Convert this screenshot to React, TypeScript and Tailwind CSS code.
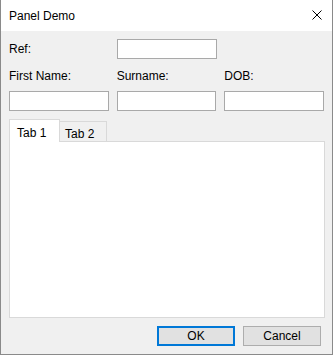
// Win32 스타일 "Panel Demo" 대화상자.

const FONT = "font-['Segoe_UI','Liberation_Sans',Arial,sans-serif]";

function TextBox() {
  return <div className="h-[20px] w-[100px] border border-[#a9a9a9] bg-white" />;
}

export default function App() {
  return (
    <div
      className={`${FONT} flex h-[355px] w-[333px] flex-col border-x border-b border-[#8a8a8a] text-[12px] text-black`}
    >
      {/* 제목 표시줄 */}
      <div className="flex h-[31px] shrink-0 items-center justify-between bg-white pl-[8px] pr-[10px]">
        <span className="text-[12px]">Panel Demo</span>
        <svg width="10" height="10" viewBox="0 0 10 10" className="mt-[-1px]">
          <path d="M0.5 0.5 L9.5 9.5 M9.5 0.5 L0.5 9.5" stroke="#000" strokeWidth="1" />
        </svg>
      </div>

      <div className="flex flex-1 flex-col bg-[#f0f0f0] px-[8px] pt-[8px]">
        <div className="flex h-[20px] items-center">
          <span className="w-[108px]">Ref:</span>
          <TextBox />
        </div>

        <div className="mt-[9px] flex h-[16px] items-center gap-[8px]">
          <span className="w-[100px]">First Name:</span>
          <span className="w-[100px]">Surname:</span>
          <span className="w-[100px]">DOB:</span>
        </div>

        <div className="mt-[7px] flex gap-[8px]">
          <TextBox />
          <TextBox />
          <TextBox />
        </div>

        {/* 탭 */}
        <div className="mt-[8px] flex h-[23px] items-end">
          <div className="relative z-10 flex h-[23px] w-[51px] items-start border-x border-t border-[#d9d9d9] bg-white pl-[7px] pt-[4px]">
            Tab 1
          </div>
          <div className="flex h-[21px] w-[47px] items-start border-r border-t border-[#d9d9d9] pl-[5px] pt-[3px]">
            Tab 2
          </div>
        </div>
        <div className="mt-[-1px] h-[177px] w-[316px] border border-[#d9d9d9] bg-white" />

        <div className="mt-[8px] flex justify-end gap-[8px] pr-[3px]">
          <button
            type="button"
            className="h-[20px] w-[78px] border-2 border-[#0078d7] bg-[#e1e1e1] text-[12px] leading-none"
          >
            OK
          </button>
          <button
            type="button"
            className="h-[20px] w-[78px] border border-[#adadad] bg-[#e1e1e1] text-[12px] leading-none"
          >
            Cancel
          </button>
        </div>
      </div>
    </div>
  );
}
